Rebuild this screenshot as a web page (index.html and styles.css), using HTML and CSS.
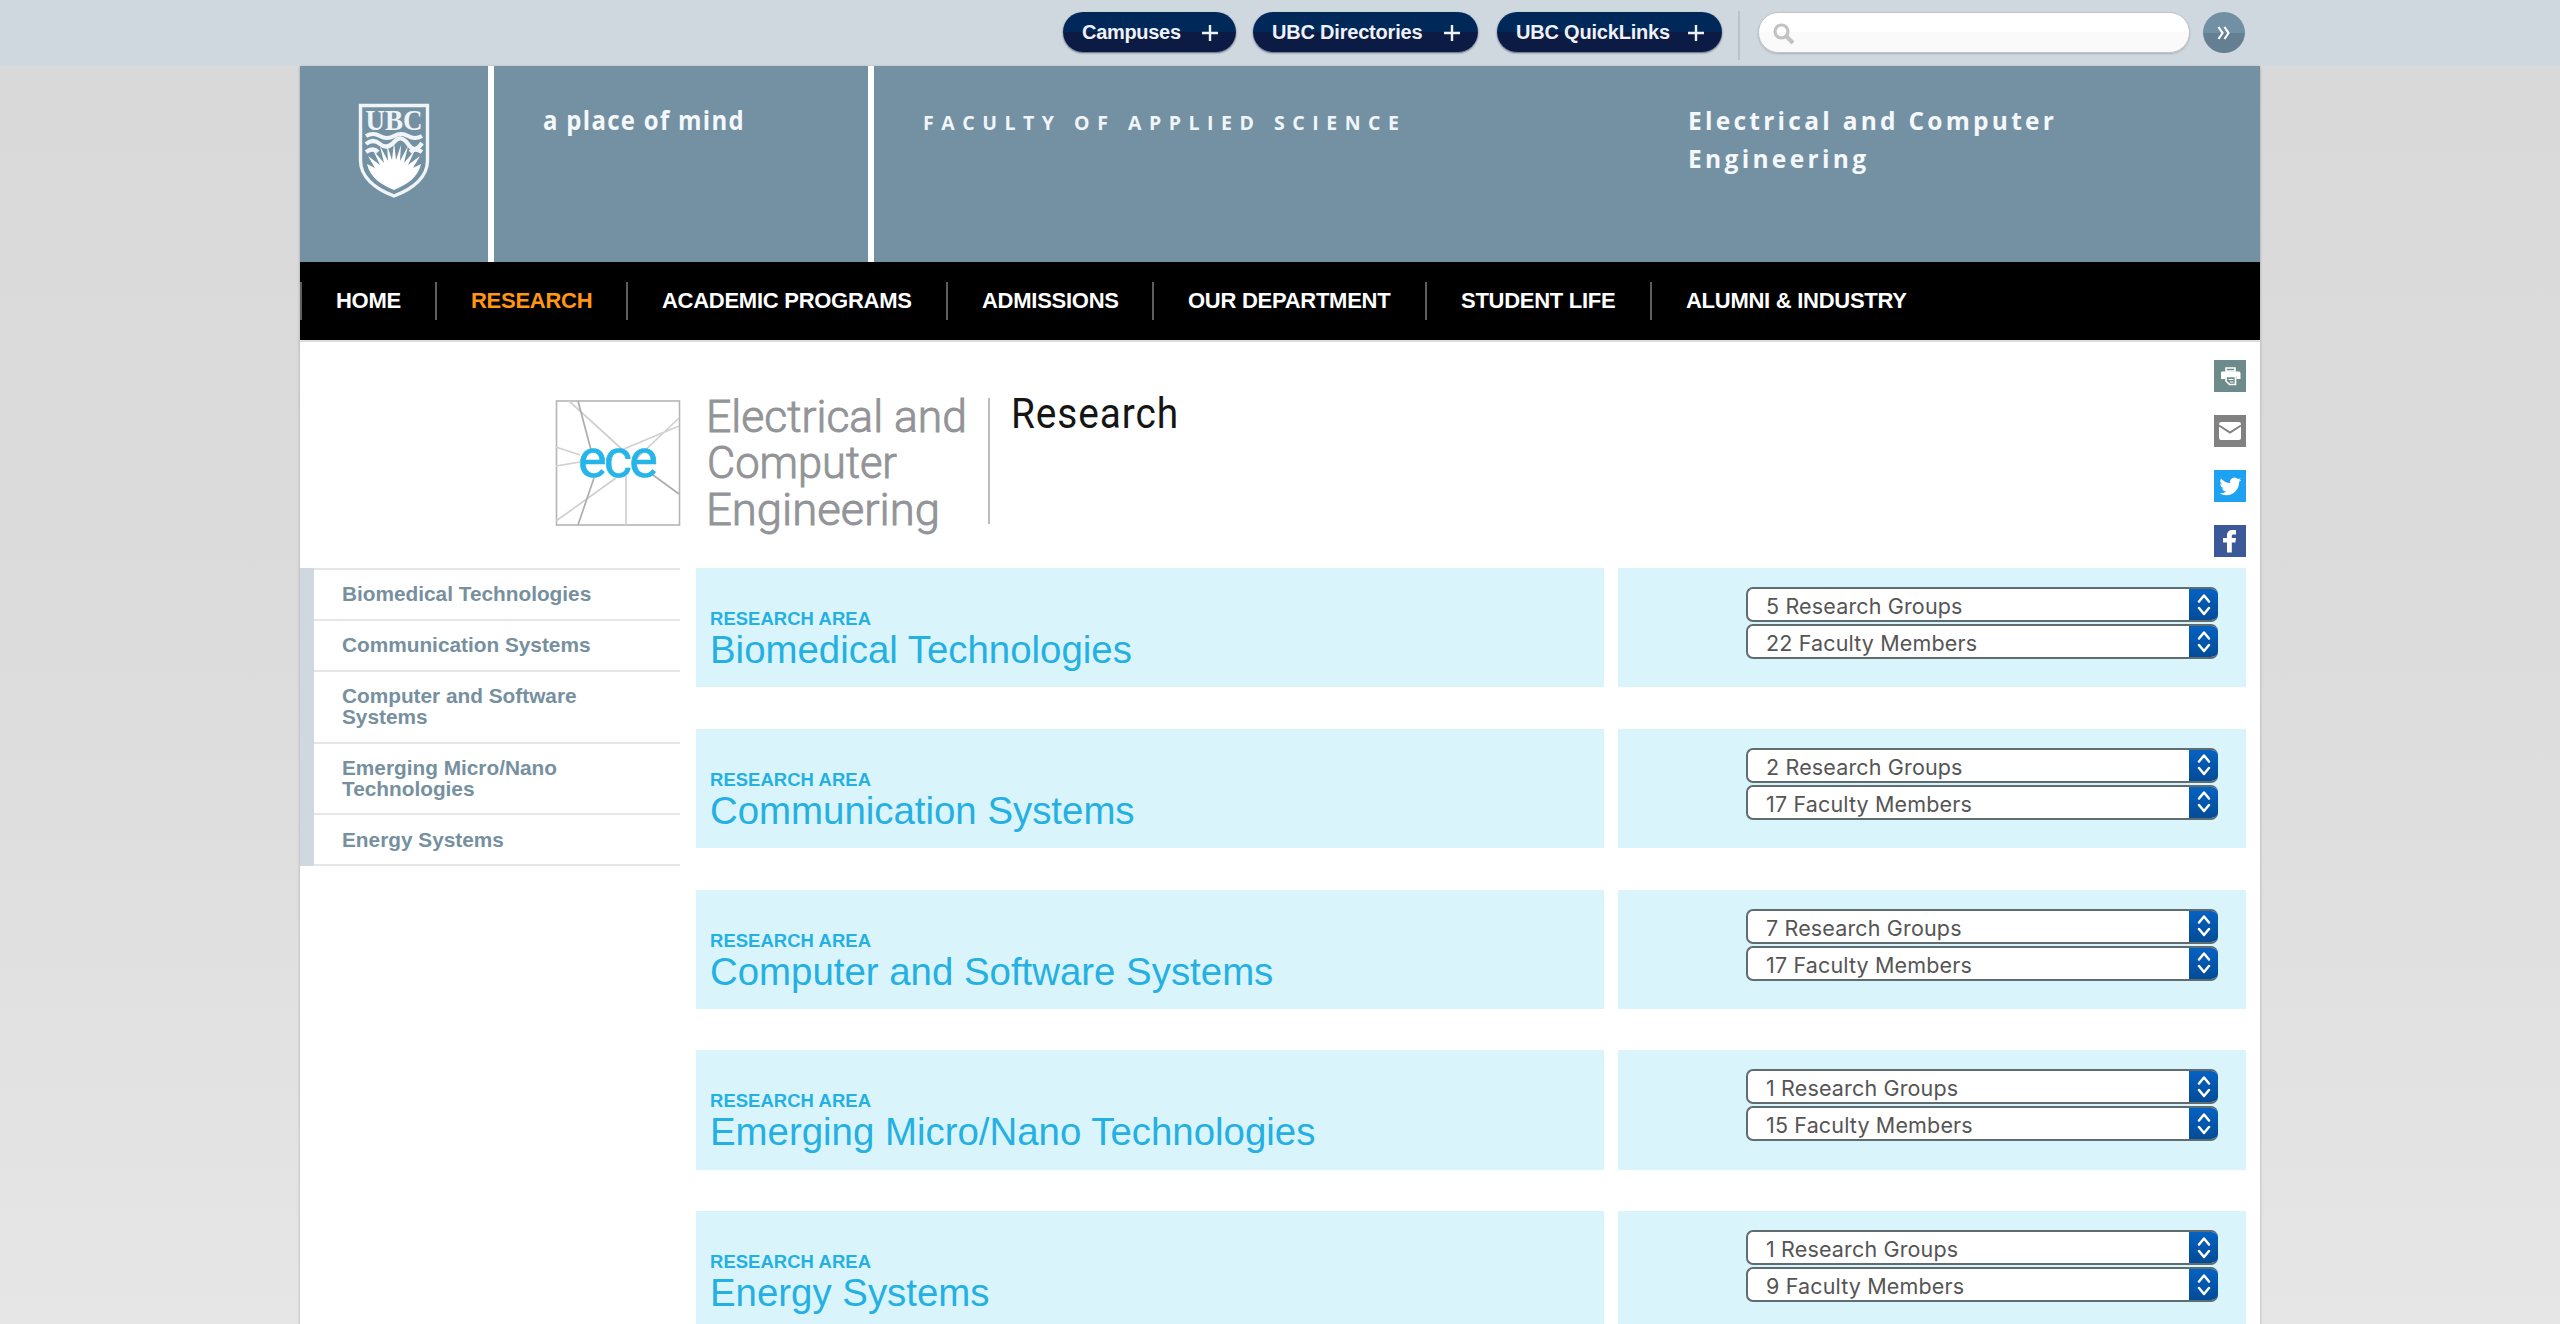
FILE: index.html
```html
<!DOCTYPE html>
<html lang="en">
<head>
<meta charset="utf-8">
<title>Research | Electrical and Computer Engineering</title>
<link rel="stylesheet" href="styles.css">
</head>
<body>
<svg class="defs" aria-hidden="true">
  <symbol id="plus" viewBox="0 0 16 16"><path d="M8 0v16M0 8h16" stroke="#eef2f8" stroke-width="2.4"/></symbol>
  <symbol id="updown" viewBox="0 0 14 22"><path d="M2 7.500l5-6 5 6M2 14l5 6 5-6" fill="none" stroke="#fff" stroke-width="2.500" stroke-linecap="round" stroke-linejoin="round"/></symbol>
</svg>

<div class="utility">
  <div class="utility-inner">
    <a class="pill pill-campuses">Campuses<svg><use href="#plus"/></svg></a>
    <a class="pill pill-directories">UBC Directories<svg><use href="#plus"/></svg></a>
    <a class="pill pill-quicklinks">UBC QuickLinks<svg><use href="#plus"/></svg></a>
    <span class="utility-rule"></span>
    <div class="search">
      <svg width="22" height="22" viewBox="0 0 22 22"><circle cx="8.500" cy="8.500" r="6.500" fill="none" stroke="#c2c2c2" stroke-width="3.200"/><path d="M13.500 13.500l6.500 6.500" stroke="#c2c2c2" stroke-width="4"/></svg>
    </div>
    <a class="go"><svg width="14" height="14" viewBox="0 0 14 14"><path d="M1.500 1l4 6-4 6M7.500 1l4 6-4 6" fill="none" stroke="#fff" stroke-width="2.200"/></svg></a>
  </div>
</div>

<div class="page">
  <header class="banner">
    <div class="crest">
      <svg width="70" height="96" viewBox="0 0 70 96">
        <path d="M1.500 1.500h67v55c0 16-14 28-33.500 35.500C15.500 84.500 1.500 72.500 1.500 56.500z" fill="none" stroke="#f1f5f8" stroke-width="3.400"/>
        <text x="6.500" y="26" textLength="57" lengthAdjust="spacingAndGlyphs" class="crest-text">UBC</text>
        <g fill="none" stroke="#f1f5f8" stroke-width="4.200">
          <path d="M7 32q7-4 14 0t14 0 14 0 14 0"/>
          <path d="M7 40q7-6 14 0t14-2 14 2 14-1"/>
          <path d="M7 48q7-5 12 0M63 48q-7-5-12 0"/>
        </g>
        <path d="M35 86C23 81 11 74 8 60l8 4-7-12 12 9-7-15 11 13-4-17 8 15-1-16 5 15 2-18 2 18 5-15-1 16 8-15-4 17 11-13-7 15 12-9-7 12 8-4c-3 14-15 21-27 26z" fill="#fff"/>
      </svg>
    </div>
    <div class="mind">
      <svg width="210" height="36" viewBox="0 0 210 36"><text x="0" y="26" textLength="202" lengthAdjust="spacingAndGlyphs" class="mind-text">a place of mind</text></svg>
    </div>
    <div class="unit">
      <svg class="faculty" width="490" height="36" viewBox="0 0 490 36"><text x="-1" y="26" textLength="476" class="faculty-text">FACULTY OF APPLIED SCIENCE</text></svg>
      <svg class="dept" width="380" height="76" viewBox="0 0 380 76">
        <text x="-1" y="26" textLength="366" class="dept-text">Electrical and Computer</text>
        <text x="-1" y="64" textLength="178" class="dept-text">Engineering</text>
      </svg>
    </div>
  </header>

  <nav class="nav">
    <a class="n1">HOME</a>
    <a class="n2 current">RESEARCH</a>
    <a class="n3">ACADEMIC PROGRAMS</a>
    <a class="n4">ADMISSIONS</a>
    <a class="n5">OUR DEPARTMENT</a>
    <a class="n6">STUDENT LIFE</a>
    <a class="n7">ALUMNI &amp; INDUSTRY</a>
  </nav>

  <div class="masthead">
    <svg class="logo" width="640" height="164" viewBox="0 -14 640 164">
      <rect x="1.500" y="3" width="123" height="124" fill="#fff" stroke="#b5b5b5" stroke-width="1.600"/>
      <g fill="none" stroke="#d0d0d0" stroke-width="1.700">
        <path d="M14 3L69 53M124 28L64 53M124 20L82 60M1 49l24 8M1 68l24-4M61 80L1 123M71 78v49"/>
        <path d="M23 3l13 49M39 80L23 127M98 77l26 19" stroke="#adadad"/>
      </g>
      <text x="23" y="79" textLength="80" lengthAdjust="spacing" class="ece">ece</text>
      <g class="logo-name">
        <text x="151" y="34" textLength="261" lengthAdjust="spacingAndGlyphs">Electrical and</text>
        <text x="152" y="80" textLength="190" lengthAdjust="spacingAndGlyphs">Computer</text>
        <text x="151" y="127" textLength="234" lengthAdjust="spacingAndGlyphs">Engineering</text>
      </g>
      <path d="M434 0v126" stroke="#aaa" stroke-width="1.600"/>
      <text x="456" y="30" textLength="168" lengthAdjust="spacingAndGlyphs" class="logo-page">Research</text>
    </svg>
    <div class="share">
      <svg class="print" viewBox="0 0 32 32"><path d="M12 8h9v3h-9z" fill="none" stroke="#fff" stroke-width="1.600"/><path d="M8 11.500h17a1.500 1.500 0 0 1 1.500 1.500v6h-4v-3H11v3H7v-6a1.500 1.500 0 0 1 1-1.500z" fill="#fff"/><path d="M12 16.500h9.500v8h-6L12 21z" fill="#6d8b8b" stroke="#fff" stroke-width="1.700"/><path d="M14.500 19.500h5M16 22h3.500" stroke="#fff" stroke-width="1.200"/></svg>
      <svg class="mail" viewBox="0 0 32 32"><rect x="5" y="7" width="22" height="18" rx="2.200" fill="#fff"/><path d="M5 10.500l11 7 11-7" fill="none" stroke="#818181" stroke-width="2"/></svg>
      <svg class="twitter" viewBox="0 0 32 32"><path transform="translate(5.500 5.500) scale(.91)" fill="#fff" d="M23.950 4.570a10 10 0 0 1-2.820.770 4.960 4.960 0 0 0 2.160-2.720c-.950.550-2 .950-3.130 1.180a4.920 4.920 0 0 0-8.380 4.480C7.690 8.090 4.070 6.130 1.640 3.160a4.920 4.920 0 0 0 1.520 6.570 4.900 4.900 0 0 1-2.230-.610v.060a4.920 4.920 0 0 0 3.950 4.830 5 5 0 0 1-2.210.080 4.940 4.940 0 0 0 4.600 3.420A9.870 9.870 0 0 1 0 19.540a14 14 0 0 0 7.550 2.210c9.050 0 14-7.500 14-13.980 0-.210 0-.420-.020-.630a9.940 9.940 0 0 0 2.460-2.550z"/></svg>
      <svg class="facebook" viewBox="0 0 32 32"><path d="M13 27.500V17.500H9v-4.500h4v-2.500C13 7 15 5 18.500 5H22v4.500h-2.500c-1.300 0-1.700.600-1.700 1.800V13H22l-.600 4.500h-3.600v10z" fill="#fff"/></svg>
    </div>
  </div>

  <div class="content">
    <ul class="side">
      <li>Biomedical Technologies</li>
      <li>Communication Systems</li>
      <li>Computer and Software Systems</li>
      <li>Emerging Micro/Nano Technologies</li>
      <li>Energy Systems</li>
    </ul>
    <main class="areas">
      <section class="area">
        <div class="area-name"><h4>RESEARCH AREA</h4><h2>Biomedical Technologies</h2></div>
        <div class="area-lists">
          <div class="select"><span>5 Research Groups</span><i><svg><use href="#updown"/></svg></i></div>
          <div class="select"><span>22 Faculty Members</span><i><svg><use href="#updown"/></svg></i></div>
        </div>
      </section>
      <section class="area">
        <div class="area-name"><h4>RESEARCH AREA</h4><h2>Communication Systems</h2></div>
        <div class="area-lists">
          <div class="select"><span>2 Research Groups</span><i><svg><use href="#updown"/></svg></i></div>
          <div class="select"><span>17 Faculty Members</span><i><svg><use href="#updown"/></svg></i></div>
        </div>
      </section>
      <section class="area">
        <div class="area-name"><h4>RESEARCH AREA</h4><h2>Computer and Software Systems</h2></div>
        <div class="area-lists">
          <div class="select"><span>7 Research Groups</span><i><svg><use href="#updown"/></svg></i></div>
          <div class="select"><span>17 Faculty Members</span><i><svg><use href="#updown"/></svg></i></div>
        </div>
      </section>
      <section class="area">
        <div class="area-name"><h4>RESEARCH AREA</h4><h2>Emerging Micro/Nano Technologies</h2></div>
        <div class="area-lists">
          <div class="select"><span>1 Research Groups</span><i><svg><use href="#updown"/></svg></i></div>
          <div class="select"><span>15 Faculty Members</span><i><svg><use href="#updown"/></svg></i></div>
        </div>
      </section>
      <section class="area">
        <div class="area-name"><h4>RESEARCH AREA</h4><h2>Energy Systems</h2></div>
        <div class="area-lists">
          <div class="select"><span>1 Research Groups</span><i><svg><use href="#updown"/></svg></i></div>
          <div class="select"><span>9 Faculty Members</span><i><svg><use href="#updown"/></svg></i></div>
        </div>
      </section>
    </main>
  </div>
</div>
</body>
</html>
```
FILE: styles.css
```css
* { box-sizing: border-box; }
html { height: 100%; overflow: hidden; }
body {
  margin: 0;
  height: 1324px;
  overflow: hidden;
  font-family: "Liberation Sans", Arial, sans-serif;
  background: linear-gradient(#d9d9d9, #dcdcdc 50%, #e6e6e6);
}
svg { display: block; flex: none; overflow: visible; }
.defs { position: absolute; width: 0; height: 0; }

/* Utility bar */
.utility { height: 66px; background: #d0d8df; }
.utility-inner {
  width: 1960px;
  height: 66px;
  margin: 0 auto;
  padding: 12px 15px 0 0;
  display: flex;
  justify-content: flex-end;
}
.pill {
  height: 40px;
  border-radius: 20px;
  padding: 1px 18px 0 19px;
  display: flex;
  align-items: center;
  justify-content: space-between;
  color: #eef2f8;
  font-weight: bold;
  font-size: 20px;
  letter-spacing: -.2px;
  white-space: nowrap;
  background: linear-gradient(#002859 50%, #0b1b44 50%);
  box-shadow: 0 1px 2px rgba(0, 20, 60, .6);
}
.pill svg { width: 16px; height: 16px; }
.pill-campuses { width: 173px; margin-right: 17px; letter-spacing: -.300px; }
.pill-directories { width: 225px; margin-right: 19px; }
.pill-quicklinks { width: 225px; margin-right: 16px; }
.utility-rule { width: 2px; height: 49px; margin: -1px 18px 0 0; background: #bcc2c7; }
.search {
  width: 432px;
  height: 41px;
  padding: 10px 14px;
  border: 1px solid #bfc3c6;
  border-radius: 21px;
  background: linear-gradient(#fff 50%, #fafafa 50%);
  box-shadow: 0 1px 2px rgba(0, 0, 0, .2);
}
.go {
  width: 42px;
  height: 41px;
  margin-left: 13px;
  border-radius: 50%;
  display: flex;
  align-items: center;
  justify-content: center;
  background: linear-gradient(#7190a4 50%, #647f91 50%);
}

/* Page column */
.page {
  width: 1960px;
  min-height: 1258px;
  margin: 0 auto;
  background: #fff;
  box-shadow: 0 1px 3px rgba(0, 0, 0, .25);
}
.banner { height: 196px; display: flex; gap: 6px; }
.crest, .mind, .unit { background: #7391a3; }
.crest { width: 188px; padding: 38px 0 0 59px; }
.crest-text { font: bold 30px "Liberation Serif", serif; fill: #f1f5f8; }
.mind { width: 374px; padding: 38px 0 0 49px; }
.mind-text { font: 700 27px "Open Sans", sans-serif; letter-spacing: 1.5px; fill: #f5f8fa; }
.unit { flex: 1; padding: 38px 0 0 50px; display: flex; }
.faculty-text { font: 700 19.500px "Open Sans", sans-serif; fill: #f1f5f8; }
.dept { margin-left: 275px; }
.dept-text { font: 700 24.500px "Open Sans", sans-serif; fill: #f5f8fa; }

.nav {
  height: 80px;
  padding-top: 20px;
  display: flex;
  background: #000;
  border-bottom: 2px solid #dcdcdc;
}
.nav a {
  height: 38px;
  padding-left: 34px;
  border-left: 2px solid #5e5e5e;
  color: #fff;
  font-weight: bold;
  font-size: 22px;
  letter-spacing: -.27px;
  line-height: 37px;
  white-space: nowrap;
}
.nav .current { color: #ff9711; }
.n1 { width: 135px; }
.n2 { width: 191px; }
.n3 { width: 320px; }
.n4 { width: 206px; }
.n5 { width: 273px; }
.n6 { width: 225px; }

.masthead {
  height: 226px;
  padding: 0 14px 0 255px;
  display: flex;
  justify-content: space-between;
}
.logo { margin-top: 42px; }
.ece { font: 400 54px Roboto, sans-serif; fill: #25b5e9; stroke: #25b5e9; stroke-width: .6px; }
.logo-name { font: 300 43.500px Roboto, sans-serif; fill: #929497; stroke: #929497; stroke-width: .9px; }
.logo-page { font: 400 42.500px Roboto, sans-serif; letter-spacing: 1px; fill: #151515; }
.share { padding-top: 18px; display: flex; flex-direction: column; gap: 22.900px; }
.share svg { width: 32px; height: 32px; }
.print { background: #6d8b8b; }
.mail { background: #818181; }
.twitter { background: #1da1f2; }
.facebook { background: #3b5998; }

.content { display: flex; align-items: flex-start; gap: 16px; padding-right: 14px; }
.side {
  width: 380px;
  margin: 0;
  padding: 0;
  list-style: none;
  border-left: 14px solid #cfd8df;
}
.side li {
  padding: 14.200px 60px 13.800px 28px;
  border-bottom: 2px solid #e6e6e6;
  color: #7690a0;
  font-weight: bold;
  font-size: 20.800px;
  line-height: 20.900px;
}
.side li:first-child { border-top: 2px solid #e6e6e6; }

.areas { flex: 1; display: flex; flex-direction: column; gap: 41.600px; }
.area { height: 119.200px; display: flex; gap: 14px; }
.area-name { width: 908px; padding: 40px 0 0 14px; background: #daf4fb; }
.area-name h4, .area-name h2 { margin: 0; color: #24b0e2; white-space: nowrap; }
.area-name h4 { font-size: 18.400px; line-height: 21px; letter-spacing: .1px; }
.area-name h2 { font-size: 38.400px; line-height: 42px; font-weight: normal; }
.area-lists {
  flex: 1;
  padding: 19px 28px 0 0;
  display: flex;
  flex-direction: column;
  align-items: flex-end;
  gap: 2px;
  background: #daf4fb;
}
.select {
  width: 472px;
  height: 35px;
  display: flex;
  justify-content: space-between;
  border: 2px solid #5f6c70;
  border-right: 0;
  border-radius: 7px;
  background: #fff;
  overflow: hidden;
}
.select span {
  padding-left: 18px;
  color: #555;
  font: 400 21.500px/34px Inter, Roboto, sans-serif;
  letter-spacing: .15px;
}
.select i {
  width: 29px;
  height: 35px;
  margin-top: -2px;
  display: flex;
  align-items: center;
  justify-content: center;
  background: linear-gradient(#0563c4, #034a94);
}
.select i svg { width: 14px; height: 22px; }
```
